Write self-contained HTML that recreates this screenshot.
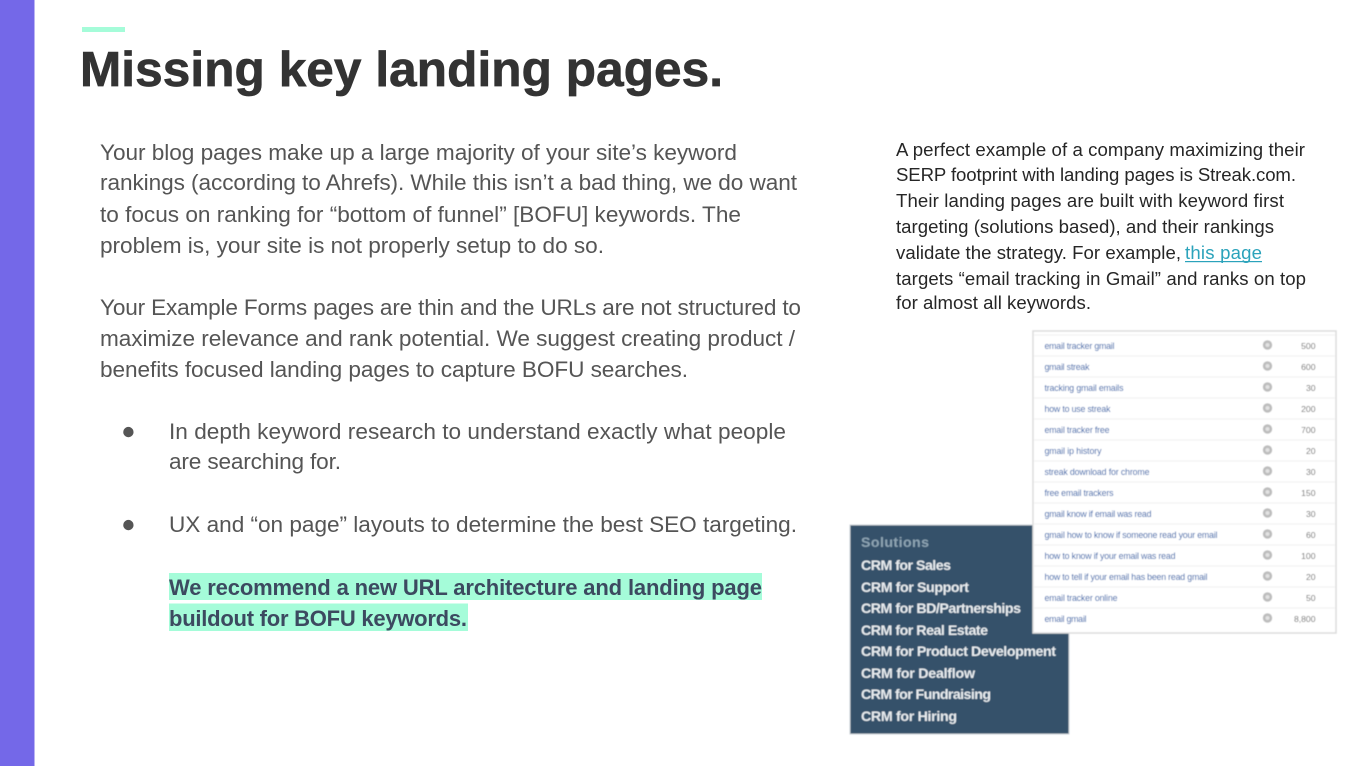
<!DOCTYPE html>
<html><head><meta charset="utf-8"><title>Missing key landing pages.</title>
<style>
html,body{margin:0;padding:0;background:#fff;width:1366px;height:766px;overflow:hidden}
svg{display:block;position:absolute;left:0;top:0}
text{font-family:"Liberation Sans",sans-serif;white-space:pre}
.b text{font-size:22.6px;fill:#555}
.h text{font-size:22px;fill:#3c4a60;font-weight:bold}
.r text{font-size:18.6px;fill:#262626}
.s text{font-size:14.2px;font-weight:bold;fill:#e9edf0}
.k text{font-size:8.8px;fill:#2b5ea8}
.n text{font-size:8.6px;fill:#6c6c6c;text-anchor:end}
</style></head><body>
<svg width="1366" height="766" viewBox="0 0 1366 766" xmlns="http://www.w3.org/2000/svg">
<defs><filter id="bl" x="-5%" y="-5%" width="110%" height="110%"><feGaussianBlur stdDeviation="0.4"/></filter></defs>
<rect x="0" y="0" width="34.5" height="766" fill="#7468e8"/>
<rect x="82" y="27" width="43" height="5" fill="#a5fcd9"/>
<text x="80" y="86" font-size="49.5" font-weight="bold" fill="#333" stroke="#333" stroke-width="0.7" textLength="643" lengthAdjust="spacing">Missing key landing pages.</text>

<g class="b">
<text x="100" y="160" textLength="637">Your blog pages make up a large majority of your site’s keyword</text>
<text x="100" y="190" textLength="697">rankings (according to Ahrefs). While this isn’t a bad thing, we do want</text>
<text x="100" y="222" textLength="641">to focus on ranking for “bottom of funnel” [BOFU] keywords. The</text>
<text x="100" y="253" textLength="504">problem is, your site is not properly setup to do so.</text>
<text x="100" y="315" textLength="701">Your Example Forms pages are thin and the URLs are not structured to</text>
<text x="100" y="346" textLength="695">maximize relevance and rank potential. We suggest creating product /</text>
<text x="100" y="377" textLength="588">benefits focused landing pages to capture BOFU searches.</text>
<text x="122.5" y="435.5" style="font-size:13.5px;font-family:'DejaVu Sans',sans-serif">●</text>
<text x="169" y="439" textLength="617">In depth keyword research to understand exactly what people</text>
<text x="169" y="469" textLength="172">are searching for.</text>
<text x="122.5" y="528.5" style="font-size:13.5px;font-family:'DejaVu Sans',sans-serif">●</text>
<text x="169" y="532" textLength="628">UX and “on page” layouts to determine the best SEO targeting.</text>
</g>

<rect x="169" y="573" width="593" height="27" fill="#a5fcd9"/>
<rect x="169" y="603.5" width="299" height="27.5" fill="#a5fcd9"/>
<g class="h">
<text x="169" y="595" textLength="593">We recommend a new URL architecture and landing page</text>
<text x="169" y="626" textLength="298">buildout for BOFU keywords.</text>
</g>

<g class="r">
<text x="896" y="156" textLength="409">A perfect example of a company maximizing their</text>
<text x="896" y="181" textLength="400">SERP footprint with landing pages is Streak.com.</text>
<text x="896" y="207" textLength="388">Their landing pages are built with keyword first</text>
<text x="896" y="233" textLength="378">targeting (solutions based), and their rankings</text>
<text x="896" y="259" textLength="285">validate the strategy. For example,</text>
<text x="1185" y="259" textLength="77" style="fill:#2ba3bb">this page</text>
<text x="896" y="285" textLength="410">targets “email tracking in Gmail” and ranks on top</text>
<text x="896" y="309" textLength="195">for almost all keywords.</text>
</g>
<rect x="1185" y="261" width="77" height="1.2" fill="#2ba3bb"/>

<g filter="url(#bl)">
<rect x="850" y="525" width="219" height="209" fill="#34516b" stroke="#c9d0d6" stroke-width="1"/>
<g class="s">
<text x="861" y="547" style="fill:#8ea4b3" textLength="68">Solutions</text>
<text x="861" y="570" textLength="90">CRM for Sales</text>
<text x="861" y="592" textLength="108">CRM for Support</text>
<text x="861" y="613" textLength="160">CRM for BD/Partnerships</text>
<text x="861" y="635" textLength="127">CRM for Real Estate</text>
<text x="861" y="656" textLength="195">CRM for Product Development</text>
<text x="861" y="678" textLength="114">CRM for Dealflow</text>
<text x="861" y="699" textLength="130">CRM for Fundraising</text>
<text x="861" y="721" textLength="96">CRM for Hiring</text>
</g>

<rect x="1033" y="331" width="303" height="302" fill="#fff" stroke="#dcdcdc" stroke-width="1.5"/>
<g stroke="#f0f0f0" stroke-width="1">
<line x1="1034" x2="1335" y1="335" y2="335"/><line x1="1034" x2="1335" y1="356" y2="356"/><line x1="1034" x2="1335" y1="377" y2="377"/><line x1="1034" x2="1335" y1="398" y2="398"/><line x1="1034" x2="1335" y1="419" y2="419"/><line x1="1034" x2="1335" y1="440" y2="440"/><line x1="1034" x2="1335" y1="461" y2="461"/><line x1="1034" x2="1335" y1="482" y2="482"/><line x1="1034" x2="1335" y1="503" y2="503"/><line x1="1034" x2="1335" y1="524" y2="524"/><line x1="1034" x2="1335" y1="545" y2="545"/><line x1="1034" x2="1335" y1="566" y2="566"/><line x1="1034" x2="1335" y1="587" y2="587"/><line x1="1034" x2="1335" y1="608" y2="608"/>
</g>
<g class="k">
<text x="1044.5" y="349" textLength="70">email tracker gmail</text>
<text x="1044.5" y="370" textLength="45">gmail streak</text>
<text x="1044.5" y="391" textLength="79">tracking gmail emails</text>
<text x="1044.5" y="412" textLength="66">how to use streak</text>
<text x="1044.5" y="433" textLength="65">email tracker free</text>
<text x="1044.5" y="454" textLength="57">gmail ip history</text>
<text x="1044.5" y="475" textLength="105">streak download for chrome</text>
<text x="1044.5" y="496" textLength="69">free email trackers</text>
<text x="1044.5" y="517" textLength="107">gmail know if email was read</text>
<text x="1044.5" y="538" textLength="173">gmail how to know if someone read your email</text>
<text x="1044.5" y="559" textLength="131">how to know if your email was read</text>
<text x="1044.5" y="580" textLength="163">how to tell if your email has been read gmail</text>
<text x="1044.5" y="601" textLength="73">email tracker online</text>
<text x="1044.5" y="622" textLength="42">email gmail</text>
</g>
<g fill="#bdbdbd" stroke="none">
<circle cx="1267.5" cy="345" r="4.7"/><circle cx="1267.5" cy="366" r="4.7"/><circle cx="1267.5" cy="387" r="4.7"/><circle cx="1267.5" cy="408" r="4.7"/><circle cx="1267.5" cy="429" r="4.7"/><circle cx="1267.5" cy="450" r="4.7"/><circle cx="1267.5" cy="471" r="4.7"/><circle cx="1267.5" cy="492" r="4.7"/><circle cx="1267.5" cy="513" r="4.7"/><circle cx="1267.5" cy="534" r="4.7"/><circle cx="1267.5" cy="555" r="4.7"/><circle cx="1267.5" cy="576" r="4.7"/><circle cx="1267.5" cy="597" r="4.7"/><circle cx="1267.5" cy="618" r="4.7"/>
</g>
<g fill="#e2e2e2" stroke="none">
<circle cx="1267.5" cy="345" r="2"/><circle cx="1267.5" cy="366" r="2"/><circle cx="1267.5" cy="387" r="2"/><circle cx="1267.5" cy="408" r="2"/><circle cx="1267.5" cy="429" r="2"/><circle cx="1267.5" cy="450" r="2"/><circle cx="1267.5" cy="471" r="2"/><circle cx="1267.5" cy="492" r="2"/><circle cx="1267.5" cy="513" r="2"/><circle cx="1267.5" cy="534" r="2"/><circle cx="1267.5" cy="555" r="2"/><circle cx="1267.5" cy="576" r="2"/><circle cx="1267.5" cy="597" r="2"/><circle cx="1267.5" cy="618" r="2"/>
</g>
<g class="n">
<text x="1315.5" y="349">500</text><text x="1315.5" y="370">600</text><text x="1315.5" y="391">30</text><text x="1315.5" y="412">200</text><text x="1315.5" y="433">700</text><text x="1315.5" y="454">20</text><text x="1315.5" y="475">30</text><text x="1315.5" y="496">150</text><text x="1315.5" y="517">30</text><text x="1315.5" y="538">60</text><text x="1315.5" y="559">100</text><text x="1315.5" y="580">20</text><text x="1315.5" y="601">50</text><text x="1315.5" y="622">8,800</text>
</g>
</g>
</svg>
</body></html>
